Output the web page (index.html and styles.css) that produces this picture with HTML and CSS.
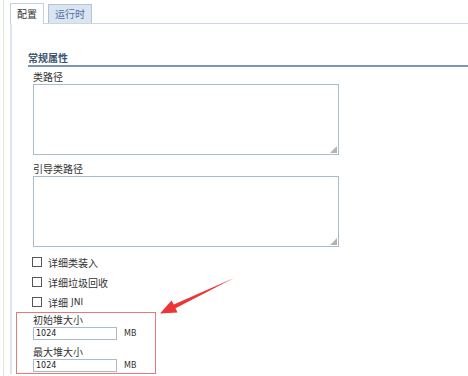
FILE: index.html
```html
<!DOCTYPE html>
<html>
<head>
    <title>JVM 配置</title>
    <link rel="stylesheet" href="styles.css">
</head>
<body>
    <div class="frame">
        <div class="tabs">
            <div class="tab active">配置</div>
            <div class="tab">运行时</div>
        </div>

        <div class="panel">
            <div class="section-title">常规属性</div>

            <div class="fields">
                <div class="label">类路径</div>
                <div class="area-wrap"><textarea class="area"></textarea></div>

                <div class="label second">引导类路径</div>
                <div class="area-wrap"><textarea class="area"></textarea></div>

                <div class="checks">
                    <div class="check"><span class="box"></span>详细类装入</div>
                    <div class="check"><span class="box"></span>详细垃圾回收</div>
                    <div class="check"><span class="box"></span>详细 <span class="latin">JNI</span></div>
                </div>

                <!-- highlighted heap settings -->
                <div class="heap">
                    <div class="label">初始堆大小</div>
                    <div class="size-row">
                        <input class="size" type="text" value="1024">
                        <span class="unit">MB</span>
                    </div>
                    <div class="label gap">最大堆大小</div>
                    <div class="size-row">
                        <input class="size" type="text" value="1024">
                        <span class="unit">MB</span>
                    </div>
                </div>
            </div>
        </div>
    </div>

    <svg class="arrow" width="90" height="60" viewBox="0 0 90 60">
        <polygon points="84,8 25.5,38.3 27.5,42.5 10,43.5 21.5,30.5 23.8,34.4" fill="#ee3535"/>
    </svg>
</body>
</html>
```

FILE: styles.css
```css
body {
    margin: 0;
    background-color: #fff;
    font-family: "Noto Sans CJK SC", "Liberation Sans", sans-serif;
    font-size: 10px;
    color: #333;
}

.frame {
    margin-left: 3px;
    border-left: 1px solid #e2e2e2;
    min-height: 376px;
    padding-left: 6px;
    padding-top: 3px;
    box-sizing: border-box;
}

.tabs {
    display: flex;
    align-items: flex-end;
    gap: 4px;
    height: 20px;
    border-bottom: 1px solid #c9d6e3;
}

.tab {
    height: 18px;
    line-height: 18px;
    padding: 0 6px;
    border: 1px solid #b3c4d6;
    border-bottom: none;
    background-color: #dbe5f2;
    color: #4d6f9c;
}

.tab.active {
    height: 20px;
    line-height: 19px;
    margin-bottom: -1px;
    background-color: #fff;
    color: #333;
    border-color: #c4d0dc;
}

.panel {
    border-left: 2px solid #dbe6f2;
    padding-left: 16px;
    padding-top: 28px;
}

.section-title {
    font-weight: bold;
    line-height: 12px;
    color: #3b5670;
    padding-bottom: 1px;
    border-bottom: 2px solid #7b96b0;
}

.fields {
    padding-left: 5px;
    padding-top: 4px;
}

.label {
    line-height: 12px;
    height: 12px;
    margin-bottom: 1px;
}

.label.second {
    margin-top: 8px;
}

.area-wrap {
    position: relative;
    width: 306px;
    height: 71px;
}

/* dotted resize grip */
.area-wrap::after {
    content: "";
    position: absolute;
    right: 2px;
    bottom: 2px;
    width: 7px;
    height: 7px;
    background-image: radial-gradient(circle, #b4b4b4 0.8px, transparent 1px);
    background-size: 2px 2px;
    clip-path: polygon(100% 0, 100% 100%, 0 100%);
}

.area {
    display: block;
    width: 100%;
    height: 100%;
    box-sizing: border-box;
    margin: 0;
    border: 1px solid #a8bccb;
    resize: none;
}

.checks {
    margin-top: 5px;
}

.check {
    display: flex;
    align-items: center;
    height: 20px;
    margin-left: -1px;
}

.box {
    width: 8px;
    height: 8px;
    border: 1px solid #555;
    margin-right: 6px;
}

.latin {
    font-family: "DejaVu Sans", sans-serif;
    font-size: 9px;
    margin-left: 3px;
}

.heap {
    box-sizing: border-box;
    width: 140px;
    height: 62px;
    margin-left: -17px;
    padding: 1px 0 0 16px;
    border: 1px solid #e47b7b;
}

.label.gap {
    margin-top: 6px;
}

.size-row {
    display: flex;
    align-items: center;
}

.size {
    width: 84px;
    height: 13px;
    box-sizing: border-box;
    margin: 0;
    padding: 0 2px;
    border: 1px solid #a8bccb;
    font-family: "DejaVu Sans", sans-serif;
    font-size: 8px;
    color: #222;
    outline: none;
}

.unit {
    margin-left: 7px;
    font-family: "DejaVu Sans", sans-serif;
    font-size: 8px;
    color: #333;
}

.arrow {
    position: absolute;
    left: 150px;
    top: 270px;
}
```
